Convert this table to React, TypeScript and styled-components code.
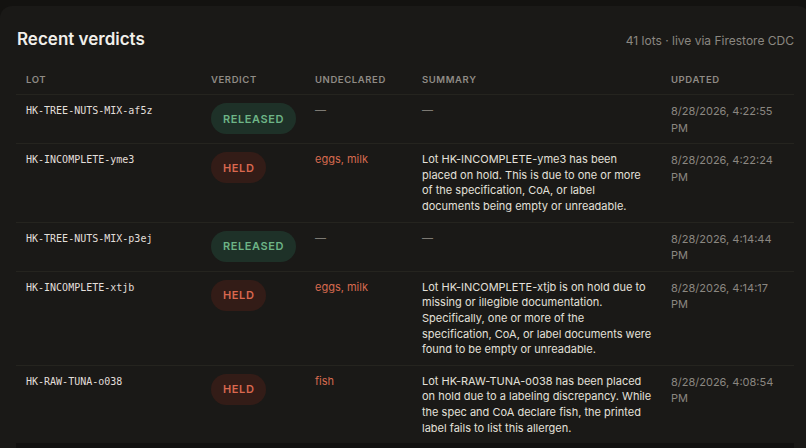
import React from "react";
import styled, { createGlobalStyle } from "styled-components";

const Global = createGlobalStyle`
  html, body { margin: 0; padding: 0; background: #131210; overflow: hidden; }
  body { font-family: Inter, "Noto Sans", sans-serif; -webkit-font-smoothing: antialiased; }
`;

const Page = styled.div`
  width: 806px;
  height: 448px;
  padding-top: 6px;
  box-sizing: border-box;
  overflow: hidden;
`;

const Card = styled.section`
  width: 810px;
  background: #1a1917;
  border-radius: 12px;
  padding: 20px 16px 0 16px;
  box-sizing: border-box;
`;

const TitleRow = styled.div`
  display: flex;
  justify-content: space-between;
  align-items: center;
  height: 24px;
  margin-bottom: 13px;
`;

const Title = styled.h2`
  margin: 1px 0 0 1px;
  font-size: 17px;
  font-weight: 600;
  color: #f1efea;
`;

const Meta = styled.span`
  font-size: 12px;
  color: #8b8781;
  margin-top: 4px;
`;

const Grid = styled.div`
  display: grid;
  grid-template-columns: 185px 104px 107px 249px 133px;
`;

const HeadCell = styled.div`
  padding: 11px 10px 8px 10px;
  font-size: 9.5px;
  line-height: 12px;
  font-weight: 600;
  letter-spacing: 0.6px;
  text-transform: uppercase;
  color: #8f8b85;
  border-bottom: 1px solid #25241f;
`;

const Cell = styled.div<{ $last?: boolean; $tight?: boolean }>`
  padding: 8px ${(p) => (p.$tight ? "8px" : "10px")} 7px 10px;
  border-bottom: ${(p) => (p.$last ? "none" : "1px solid #25241f")};
  min-width: 0;
`;

const Lot = styled.span`
  font-family: "DejaVu Sans Mono", "Liberation Mono", monospace;
  font-size: 10px;
  line-height: 15px;
  color: #e2dfda;
  display: block;
`;

const Badge = styled.span<{ $tone: "ok" | "held" }>`
  display: inline-flex;
  align-items: center;
  justify-content: center;
  height: 31px;
  padding: 0 12px;
  border-radius: 999px;
  font-size: 11px;
  font-weight: 600;
  letter-spacing: 0.6px;
  background: ${(p) => (p.$tone === "ok" ? "#1e3128" : "#331c17")};
  color: ${(p) => (p.$tone === "ok" ? "#6db486" : "#d9684f")};
`;

const Allergen = styled.span<{ $none?: boolean }>`
  display: block;
  font-size: 11px;
  line-height: 15px;
  color: ${(p) => (p.$none ? "#7d7a74" : "#d66a4f")};
`;

const Summary = styled.p<{ $none?: boolean }>`
  margin: 0;
  font-size: 11px;
  line-height: 15.6px;
  color: ${(p) => (p.$none ? "#7d7a74" : "#e3e0da")};
`;

const Updated = styled.span`
  display: block;
  font-size: 11px;
  line-height: 16.6px;
  color: #8b8781;
`;

const Footer = styled.div`
  height: 20px;
  background: #121110;
`;

type Row = {
  lot: string;
  verdict: "RELEASED" | "HELD";
  allergens: string | null;
  summary: string | null;
  updated: string;
};

const rows: Row[] = [
  { lot: "HK-TREE-NUTS-MIX-af5z", verdict: "RELEASED", allergens: null, summary: null, updated: "8/28/2026, 4:22:55 PM" },
  {
    lot: "HK-INCOMPLETE-yme3",
    verdict: "HELD",
    allergens: "eggs, milk",
    summary:
      "Lot HK-INCOMPLETE-yme3 has been placed on hold. This is due to one or more of the specification, CoA, or label documents being empty or unreadable.",
    updated: "8/28/2026, 4:22:24 PM",
  },
  { lot: "HK-TREE-NUTS-MIX-p3ej", verdict: "RELEASED", allergens: null, summary: null, updated: "8/28/2026, 4:14:44 PM" },
  {
    lot: "HK-INCOMPLETE-xtjb",
    verdict: "HELD",
    allergens: "eggs, milk",
    summary:
      "Lot HK-INCOMPLETE-xtjb is on hold due to missing or illegible documentation. Specifically, one or more of the specification, CoA, or label documents were found to be empty or unreadable.",
    updated: "8/28/2026, 4:14:17 PM",
  },
  {
    lot: "HK-RAW-TUNA-o038",
    verdict: "HELD",
    allergens: "fish",
    summary:
      "Lot HK-RAW-TUNA-o038 has been placed on hold due to a labeling discrepancy. While the spec and CoA declare fish, the printed label fails to list this allergen.",
    updated: "8/28/2026, 4:08:54 PM",
  },
];

export default function App() {
  return (
    <Page>
      <Global />
      <Card>
        <TitleRow>
          <Title>Recent verdicts</Title>
          <Meta>41 lots · live via Firestore CDC</Meta>
        </TitleRow>
        <Grid>
          <HeadCell>Lot</HeadCell>
          <HeadCell>Verdict</HeadCell>
          <HeadCell>Undeclared</HeadCell>
          <HeadCell>Summary</HeadCell>
          <HeadCell>Updated</HeadCell>
          {rows.map((r, i) => {
            const last = i === rows.length - 1;
            return (
              <React.Fragment key={r.lot}>
                <Cell $last={last}>
                  <Lot>{r.lot}</Lot>
                </Cell>
                <Cell $last={last}>
                  <Badge $tone={r.verdict === "RELEASED" ? "ok" : "held"}>{r.verdict}</Badge>
                </Cell>
                <Cell $last={last}>
                  <Allergen $none={!r.allergens}>{r.allergens ?? "—"}</Allergen>
                </Cell>
                <Cell $last={last} $tight>
                  <Summary $none={!r.summary}>{r.summary ?? "—"}</Summary>
                </Cell>
                <Cell $last={last}>
                  <Updated>{r.updated}</Updated>
                </Cell>
              </React.Fragment>
            );
          })}
        </Grid>
        <Footer />
      </Card>
    </Page>
  );
}
